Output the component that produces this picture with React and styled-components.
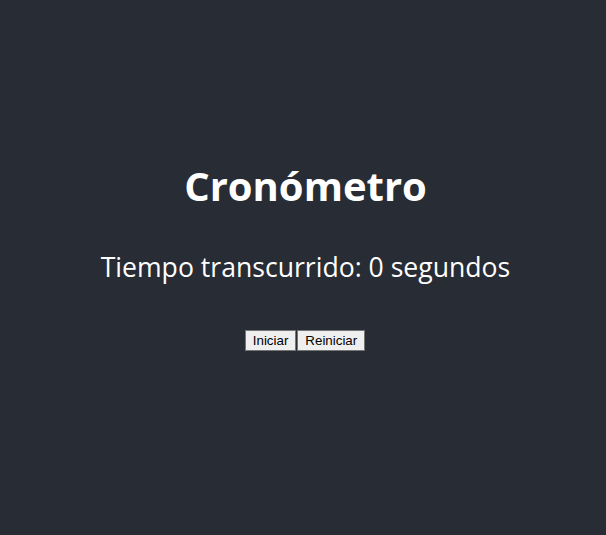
import React, { useState, useEffect } from 'react';
import styled, { createGlobalStyle } from 'styled-components';

const GlobalStyle = createGlobalStyle`
  body {
    margin: 0;
    font-family: "Open Sans", "Noto Sans", sans-serif;
  }
`;

const Header = styled.div`
  background-color: #282c34;
  min-height: 100vh;
  padding-left: 5px;
  box-sizing: border-box;
  display: flex;
  flex-direction: column;
  align-items: center;
  justify-content: center;
  color: white;
  font-size: calc(10px + 2vmin);
`;

const Title = styled.h1`
  font-size: 40px;
  font-weight: 700;
  margin: 0 0 36px;
`;

const Elapsed = styled.h2`
  font-size: 26.6px;
  font-weight: 400;
  margin: 0 0 45px;
`;

const Controls = styled.div`
  display: flex;
  margin-bottom: 26px;
`;

const Button = styled.button`
  font-family: "Liberation Sans", Arial, sans-serif;
  font-size: 13.33px;
  color: #000;
  background: #efefef;
  border: 1px solid #767676;
  border-radius: 0;
  padding: 2px 7px;
  margin: 0 1px 0 0;
`;

export default function App() {
  const [seconds, setSeconds] = useState(0);
  const [running, setRunning] = useState(false);

  useEffect(() => {
    if (!running) return;
    const id = setInterval(() => setSeconds((s) => s + 1), 1000);
    return () => clearInterval(id);
  }, [running]);

  return (
    <>
      <GlobalStyle />
      <Header>
        <Title>Cronómetro</Title>
        <Elapsed>Tiempo transcurrido: {seconds} segundos</Elapsed>
        <Controls>
          <Button onClick={() => setRunning(true)}>Iniciar</Button>
          <Button onClick={() => { setRunning(false); setSeconds(0); }}>Reiniciar</Button>
        </Controls>
      </Header>
    </>
  );
}
